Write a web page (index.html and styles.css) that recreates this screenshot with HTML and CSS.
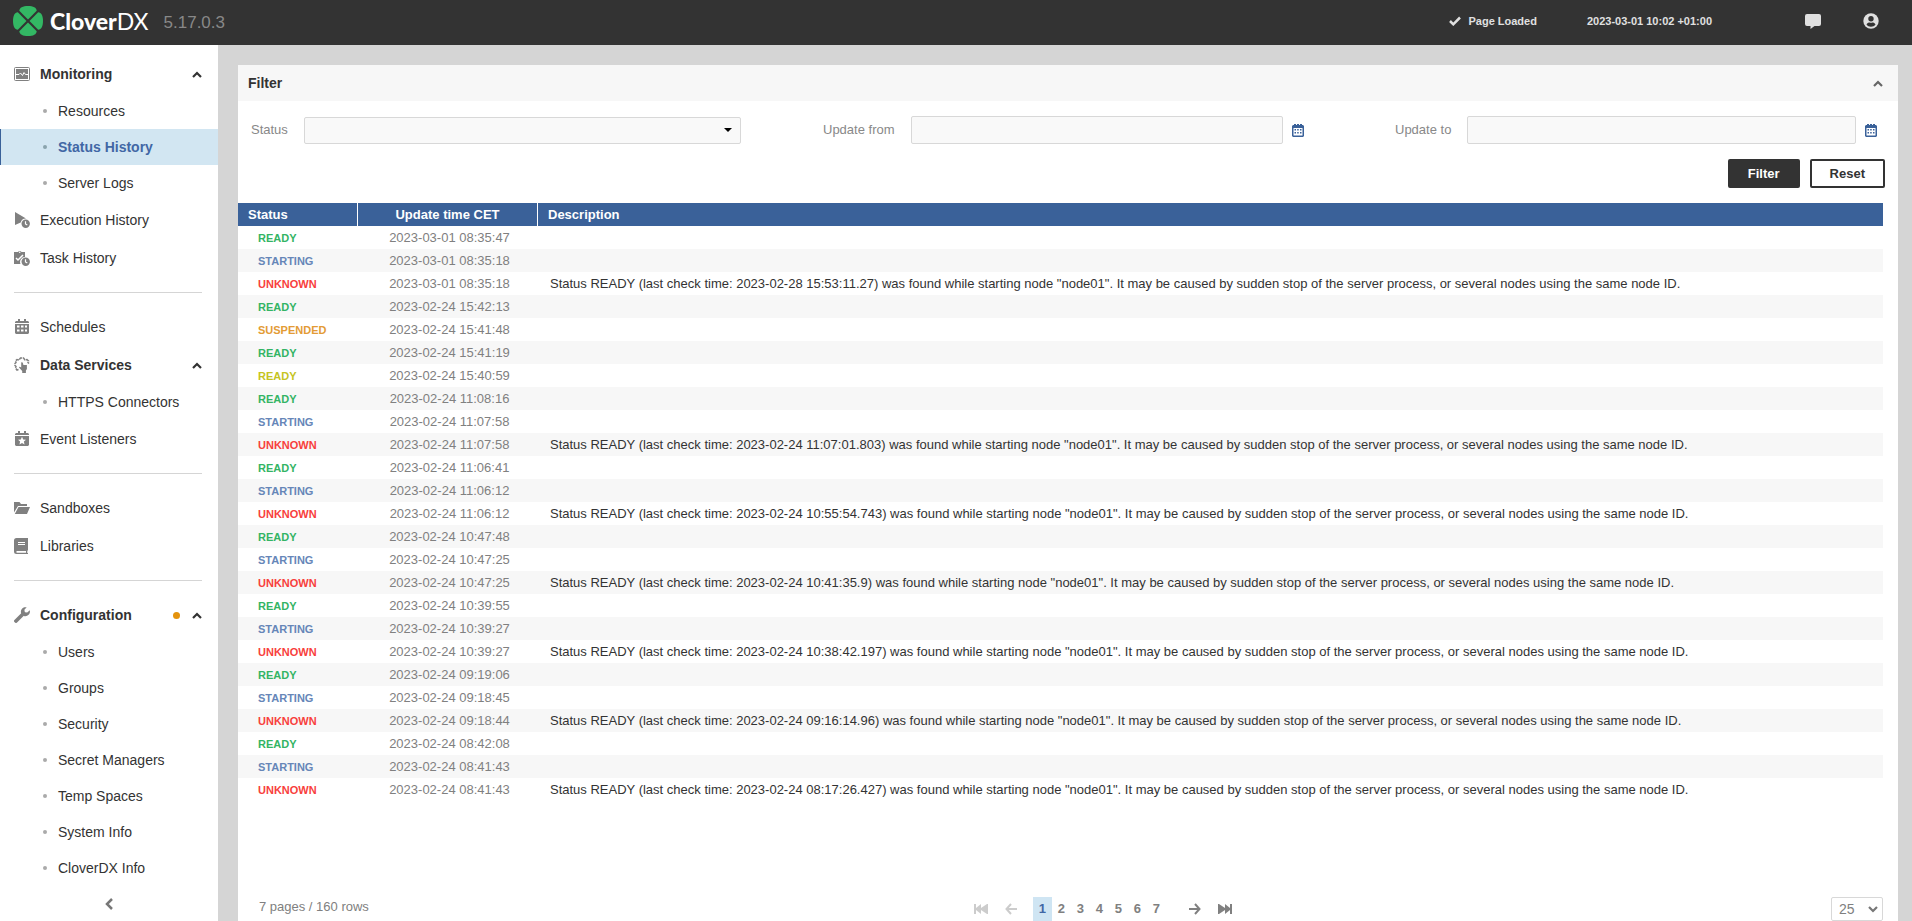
FILE: index.html
```html
<!DOCTYPE html>
<html lang="en">
<head>
<meta charset="utf-8">
<title>CloverDX Server - Status History</title>
<link rel="stylesheet" href="styles.css">
</head>
<body>
<svg class="defs" aria-hidden="true">
  <symbol id="up" viewBox="0 0 10 7"><path d="M1 6 5 2l4 4" fill="none" stroke="currentColor" stroke-width="2.2"/></symbol>
  <symbol id="calendar" viewBox="0 0 12 14"><path fill="currentColor" fill-rule="evenodd" d="M2 1h2v1h1V1h2v1h1V1h2v1h1l1 1v10l-1 1H1l-1-1V3l1-1h1zM1.500 5v7.500h9V5z"/><path fill="currentColor" d="M2.500 6H4v1.500H2.500zM5.200 6h1.500v1.500H5.200zM8 6h1.500v1.500H8zM2.500 9H4v1.500H2.500zM5.200 9h1.500v1.500H5.200zM8 9h1.500v1.500H8z"/></symbol>
</svg>
<div class="app">
  <header class="topbar">
    <div class="brand">
      <svg class="clover" viewBox="0 0 30 30" aria-hidden="true"><g fill="#33b864"><path id="leaf" d="M15 13.500 6.300 4.800C6.500 1.600 9.800 0 15 0s8.500 1.600 8.700 4.800z"/><use href="#leaf" transform="rotate(90 15 15)"/><use href="#leaf" transform="rotate(180 15 15)"/><use href="#leaf" transform="rotate(270 15 15)"/></g></svg>
      <span class="wordmark"><b>Clover</b>DX</span>
      <span class="version">5.17.0.3</span>
    </div>
    <div class="tools">
      <span class="loaded"><svg width="12" height="10" viewBox="0 0 12 10" aria-hidden="true"><path d="m1 5 3.300 3.300L11 1.500" fill="none" stroke="currentColor" stroke-width="2.500"/></svg>Page Loaded</span>
      <time class="clock">2023-03-01 10:02 +01:00</time>
      <button class="tool" aria-label="Messages"><svg width="16" height="16" viewBox="0 0 16 16"><path fill="currentColor" d="M2 1h12a2 2 0 0 1 2 2v8a2 2 0 0 1-2 2H9.500L5.500 16v-3H2a2 2 0 0 1-2-2V3a2 2 0 0 1 2-2z"/></svg></button>
      <button class="tool" aria-label="User"><svg width="16" height="16" viewBox="0 0 16 16"><circle cx="8" cy="8" r="7.700" fill="currentColor"/><circle cx="8" cy="5.800" r="2.700" fill="#333"/><path fill="#333" d="M3.500 11.500c.8-1.600 2-2 3-2 .9.400 2.100.4 3 0 1 0 2.200.4 3 2-1 1.500-2.700 2.200-4.500 2.200s-3.500-.7-4.500-2.200z"/></svg></button>
    </div>
  </header>
  <div class="body">
    <nav class="sidebar" aria-label="Main">
      <a class="item open" href="#"><svg class="icon" viewBox="0 0 16 16"><rect x=".5" y="1.500" width="15" height="13" rx="1" fill="none" stroke="currentColor"/><path fill="currentColor" d="M2 3h12v10H2z"/><path d="M2 8.500h3L6.500 7l2 2.500L10 6.500l1.500 2H14" fill="none" stroke="#fff"/></svg><span>Monitoring</span><svg class="chev"><use href="#up"/></svg></a>
      <a class="sub" href="#">Resources</a>
      <a class="sub active" href="#" aria-current="page">Status History</a>
      <a class="sub" href="#">Server Logs</a>
      <a class="item" href="#"><svg class="icon" viewBox="0 0 16 16"><path fill="currentColor" d="M1 0 12 6.500A5.300 5.300 0 0 0 6.700 10.500L1 13z"/><circle cx="11.700" cy="11.700" r="4.200" fill="currentColor"/><path d="M11.500 9.300v2.700l1.800 1" fill="none" stroke="#fff" stroke-width="1.200"/></svg><span>Execution History</span></a>
      <a class="item" href="#"><svg class="icon" viewBox="0 0 16 16"><path fill="currentColor" d="M0 2h4a2 2 0 0 1 3.500 0H11v5a5 5 0 0 0-4.500 7H0z"/><circle cx="5.700" cy="2.200" r=".8" fill="#fff"/><path d="m2 8 2 2 5-5" fill="none" stroke="#fff" stroke-width="1.500"/><circle cx="11.700" cy="11.700" r="4.200" fill="currentColor"/><path d="M11.500 9.300v2.700l1.800 1" fill="none" stroke="#fff" stroke-width="1.200"/></svg><span>Task History</span></a>
      <hr>
      <a class="item" href="#"><svg class="icon" viewBox="0 0 16 16"><path fill="currentColor" fill-rule="evenodd" d="M4 0h2v2h4V0h2v2h2l1 1v1H1V3l1-1h2zM1 5h14v9l-1 1H2l-1-1zM3 6.500v2h2.500v-2zM7 6.500v2h2.500v-2zM11 6.500v2h2v-2zM3 10.500v2h2.500v-2zM7 10.500v2h2.500v-2zM11 10.500v2h2v-2z"/></svg><span>Schedules</span></a>
      <a class="item open" href="#"><svg class="icon" viewBox="0 0 16 16"><path d="M4.500 12.500 3 13l-1.500-2L2 9.500l-1-1v-2l1-1L1.500 4 3 2.500l2 .5L6.500 1h3L11 3l2-.5L14.500 4 14 5.500l1 1" fill="none" stroke="currentColor" stroke-width="1.500" stroke-dasharray="3.500 .7"/><path fill="currentColor" d="M7.200 5.500c.6-.6 1.500-.4 1.700.4l.5 2 3.500.1V12l-1 1.500V16H8.200v-2L5 10.500c.2-1 1-1 2.200.1z"/></svg><span>Data Services</span><svg class="chev"><use href="#up"/></svg></a>
      <a class="sub" href="#">HTTPS Connectors</a>
      <a class="item" href="#"><svg class="icon" viewBox="0 0 16 16"><path fill="currentColor" d="M4 0h2v2h4V0h2v2h2l1 1v1H1V3l1-1h2zM1 5h14v9l-1 1H2l-1-1z"/><path fill="#fff" d="m8 5.800 1.200 2.600 2.800.3-2.100 1.900.6 2.800L8 12l-2.500 1.400.6-2.800L4 8.700l2.800-.3z"/></svg><span>Event Listeners</span></a>
      <hr>
      <a class="item" href="#"><svg class="icon" viewBox="0 0 16 16"><path fill="currentColor" d="M0 2h5.500l1.500 2h6v2H4L0 12.500zM4.500 7H16l-3 7H.8z"/></svg><span>Sandboxes</span></a>
      <a class="item" href="#"><svg class="icon" viewBox="0 0 16 16"><path fill="currentColor" fill-rule="evenodd" d="M2.500 0H14v12.500h-.7V15h.7v1H2.500A2.500 2.500 0 0 1 0 13.500v-11A2.500 2.500 0 0 1 2.500 0zM4 4v1h7V4zM4 6v1h7V6zM2.500 13v1.700H12V13z"/></svg><span>Libraries</span></a>
      <hr>
      <a class="item open" href="#"><svg class="icon" viewBox="0 0 16 16"><path d="m2 14 7.500-7.500" fill="none" stroke="currentColor" stroke-width="3.800" stroke-linecap="round"/><path fill="currentColor" d="M12.700.3A4.700 4.700 0 0 0 7 6l3 3a4.700 4.700 0 0 0 5.800-5.700L13.200 5.600 10.800 5.200 10.400 2.800z"/></svg><span>Configuration</span><i class="dot"></i><svg class="chev"><use href="#up"/></svg></a>
      <a class="sub" href="#">Users</a>
      <a class="sub" href="#">Groups</a>
      <a class="sub" href="#">Security</a>
      <a class="sub" href="#">Secret Managers</a>
      <a class="sub" href="#">Temp Spaces</a>
      <a class="sub" href="#">System Info</a>
      <a class="sub" href="#">CloverDX Info</a>
      <button class="collapse" aria-label="Collapse menu"><svg width="9" height="12" viewBox="0 0 9 12"><path d="M7 1 2 6l5 5" fill="none" stroke="currentColor" stroke-width="2.500"/></svg></button>
    </nav>
    <main class="main">
      <section class="panel">
        <h2 class="panel-title">Filter<button aria-label="Collapse filter"><svg class="chev"><use href="#up"/></svg></button></h2>
        <form class="filter">
          <div class="fields">
            <div class="field field-status"><label for="status">Status</label><span class="picker"><select id="status"><option></option><option>READY</option><option>STARTING</option><option>SUSPENDED</option><option>UNKNOWN</option></select><svg class="caret" viewBox="0 0 8 4"><path d="M0 0h8L4 4z"/></svg></span></div>
            <div class="field field-from"><label for="from">Update from</label><input id="from" type="text"><button type="button" class="cal" aria-label="Choose start date"><svg width="12" height="14"><use href="#calendar"/></svg></button></div>
            <div class="field field-to"><label for="to">Update to</label><input id="to" type="text"><button type="button" class="cal" aria-label="Choose end date"><svg width="12" height="14"><use href="#calendar"/></svg></button></div>
          </div>
          <div class="actions"><button type="button" class="btn dark">Filter</button><button type="reset" class="btn">Reset</button></div>
        </form>
        <div class="table-area">
          <table class="history">
            <thead><tr><th class="c-status">Status</th><th class="c-time">Update time CET</th><th>Description</th></tr></thead>
            <tbody>
              <tr><td class="ready">READY</td><td>2023-03-01 08:35:47</td><td></td></tr>
              <tr><td class="starting">STARTING</td><td>2023-03-01 08:35:18</td><td></td></tr>
              <tr><td class="unknown">UNKNOWN</td><td>2023-03-01 08:35:18</td><td>Status READY (last check time: 2023-02-28 15:53:11.27) was found while starting node "node01". It may be caused by sudden stop of the server process, or several nodes using the same node ID.</td></tr>
              <tr><td class="ready">READY</td><td>2023-02-24 15:42:13</td><td></td></tr>
              <tr><td class="suspended">SUSPENDED</td><td>2023-02-24 15:41:48</td><td></td></tr>
              <tr><td class="ready">READY</td><td>2023-02-24 15:41:19</td><td></td></tr>
              <tr><td class="ready-warn">READY</td><td>2023-02-24 15:40:59</td><td></td></tr>
              <tr><td class="ready">READY</td><td>2023-02-24 11:08:16</td><td></td></tr>
              <tr><td class="starting">STARTING</td><td>2023-02-24 11:07:58</td><td></td></tr>
              <tr><td class="unknown">UNKNOWN</td><td>2023-02-24 11:07:58</td><td>Status READY (last check time: 2023-02-24 11:07:01.803) was found while starting node "node01". It may be caused by sudden stop of the server process, or several nodes using the same node ID.</td></tr>
              <tr><td class="ready">READY</td><td>2023-02-24 11:06:41</td><td></td></tr>
              <tr><td class="starting">STARTING</td><td>2023-02-24 11:06:12</td><td></td></tr>
              <tr><td class="unknown">UNKNOWN</td><td>2023-02-24 11:06:12</td><td>Status READY (last check time: 2023-02-24 10:55:54.743) was found while starting node "node01". It may be caused by sudden stop of the server process, or several nodes using the same node ID.</td></tr>
              <tr><td class="ready">READY</td><td>2023-02-24 10:47:48</td><td></td></tr>
              <tr><td class="starting">STARTING</td><td>2023-02-24 10:47:25</td><td></td></tr>
              <tr><td class="unknown">UNKNOWN</td><td>2023-02-24 10:47:25</td><td>Status READY (last check time: 2023-02-24 10:41:35.9) was found while starting node "node01". It may be caused by sudden stop of the server process, or several nodes using the same node ID.</td></tr>
              <tr><td class="ready">READY</td><td>2023-02-24 10:39:55</td><td></td></tr>
              <tr><td class="starting">STARTING</td><td>2023-02-24 10:39:27</td><td></td></tr>
              <tr><td class="unknown">UNKNOWN</td><td>2023-02-24 10:39:27</td><td>Status READY (last check time: 2023-02-24 10:38:42.197) was found while starting node "node01". It may be caused by sudden stop of the server process, or several nodes using the same node ID.</td></tr>
              <tr><td class="ready">READY</td><td>2023-02-24 09:19:06</td><td></td></tr>
              <tr><td class="starting">STARTING</td><td>2023-02-24 09:18:45</td><td></td></tr>
              <tr><td class="unknown">UNKNOWN</td><td>2023-02-24 09:18:44</td><td>Status READY (last check time: 2023-02-24 09:16:14.96) was found while starting node "node01". It may be caused by sudden stop of the server process, or several nodes using the same node ID.</td></tr>
              <tr><td class="ready">READY</td><td>2023-02-24 08:42:08</td><td></td></tr>
              <tr><td class="starting">STARTING</td><td>2023-02-24 08:41:43</td><td></td></tr>
              <tr><td class="unknown">UNKNOWN</td><td>2023-02-24 08:41:43</td><td>Status READY (last check time: 2023-02-24 08:17:26.427) was found while starting node "node01". It may be caused by sudden stop of the server process, or several nodes using the same node ID.</td></tr>
            </tbody>
          </table>
        </div>
        <footer class="pager">
          <span class="summary">7 pages / 160 rows</span>
          <div class="pages">
            <button class="nav" disabled aria-label="First page"><svg width="14" height="12" viewBox="0 0 14 12"><path fill="currentColor" d="M0 1h2v4l5-4v4l6-4h1v10h-1L7 7v4L2 7v4H0z"/></svg></button>
            <button class="nav" disabled aria-label="Previous page"><svg width="12" height="12" viewBox="0 0 12 12"><path d="M6 1 1.500 6 6 11M1.500 6H12" fill="none" stroke="currentColor" stroke-width="2"/></svg></button>
            <span class="numbers"><button class="current" aria-current="page">1</button><button>2</button><button>3</button><button>4</button><button>5</button><button>6</button><button>7</button></span>
            <button class="nav" aria-label="Next page"><svg width="12" height="12" viewBox="0 0 12 12"><path d="m6 1 4.500 5L6 11M10.500 6H0" fill="none" stroke="currentColor" stroke-width="2"/></svg></button>
            <button class="nav" aria-label="Last page"><svg width="14" height="12" viewBox="0 0 14 12"><path fill="currentColor" d="M14 1h-2v4L7 1v4L1 1H0v10h1l6-4v4l5-4v4h2z"/></svg></button>
          </div>
          <span class="picker size"><select aria-label="Rows per page"><option>25</option><option>50</option><option>100</option></select><svg class="caret" viewBox="0 0 10 7"><path d="m1 1 4 4 4-4" fill="none" stroke="#777" stroke-width="2.200"/></svg></span>
        </footer>
      </section>
    </main>
  </div>
</div>
</body>
</html>
```
FILE: styles.css
```css
* { box-sizing: border-box; }

body {
  margin: 0;
  font: 13px/16px "Liberation Sans", Arial, sans-serif;
  color: #333;
}

button {
  border: 0;
  padding: 0;
  background: none;
  font: inherit;
  color: inherit;
}

svg { display: block; flex: none; }
.defs { display: none; }

.app {
  display: flex;
  flex-direction: column;
  height: 100vh;
  overflow: hidden;
}

/* Top bar */
.topbar {
  flex: none;
  display: flex;
  justify-content: space-between;
  align-items: center;
  height: 45px;
  padding: 0 33px 4px 13px;
  background: #333;
}
.brand, .tools, .loaded { display: flex; align-items: center; }
.clover { width: 30px; height: 30px; }
.wordmark {
  margin-left: 7px;
  font: 400 23px/30px Lato, sans-serif;
  color: #fff;
}
.wordmark b { font-weight: 900; }
.version {
  margin-left: 15px;
  padding-top: 4px;
  font-size: 17px;
  line-height: 20px;
  color: #888;
}
.tools { font-size: 11px; font-weight: bold; color: #e0e0e0; }
.loaded { gap: 7px; }
.clock { margin: 0 93px 0 50px; }
.tool + .tool { margin-left: 42px; }

.body { flex: 1; display: flex; min-height: 0; }

/* Sidebar */
.sidebar {
  flex: none;
  width: 218px;
  padding-top: 10px;
  overflow: hidden;
  font-size: 14px;
}
.sidebar a { display: flex; align-items: center; color: #333; text-decoration: none; }
.item { height: 38px; padding: 0 16px 0 14px; gap: 10px; }
.item span { flex: 1; }
.open { font-weight: bold; }
.icon { width: 16px; height: 16px; color: #808080; }
.chev { width: 10px; height: 7px; }
.dot { width: 7px; height: 7px; margin-right: 2px; border-radius: 50%; background: #e4930d; }
.sub { height: 36px; padding-left: 43px; gap: 11px; }
.sub::before { content: ""; width: 4px; height: 4px; border-radius: 50%; background: #aaa; }
.sidebar .active {
  padding-left: 42px;
  border-left: 1px solid #3a6199;
  background: #d2e6f2;
  font-weight: bold;
  color: #4167a5;
}
.active::before { background: #8aa3ad; }
.sidebar hr { height: 1px; margin: 15px 16px 15px 14px; border: 0; background: #d5d5d5; }
.collapse { display: grid; place-items: center; width: 100%; height: 36px; color: #777; }

/* Content */
.main {
  flex: 1;
  display: flex;
  min-width: 0;
  padding: 20px 14px 0 20px;
  background: #d5d5d5;
}
.panel { flex: 1; display: flex; flex-direction: column; min-width: 0; background: #fff; }
.panel-title {
  display: flex;
  justify-content: space-between;
  align-items: center;
  height: 36px;
  margin: 0;
  padding: 0 15px 0 10px;
  background: #f7f7f7;
  font-size: 14px;
}
.panel-title button { color: #666; }

.filter { padding: 15px 13px; }
.fields { display: grid; grid-template-columns: 572fr 572fr 490fr; }
.field { display: flex; align-items: center; height: 28px; color: #888; }
.field-status { padding-right: 82px; }
.field-from { padding-right: 91px; }
.field-to { padding-right: 8px; }
.field label { margin-right: 16px; }
.field input, .picker select {
  border: 1px solid #d8d8d8;
  border-radius: 2px;
  background: #f9f9f9;
  font: inherit;
}
.field input { flex: 1; min-width: 0; height: 28px; }
.picker { position: relative; flex: 1; }
.picker select { display: block; width: 100%; height: 27px; appearance: none; }
.caret { position: absolute; right: 9px; top: 11px; width: 8px; height: 4px; pointer-events: none; }
.cal { margin-left: 9px; color: #3a6199; }

.actions { display: flex; justify-content: flex-end; gap: 10px; margin-top: 15px; }
.btn {
  height: 29px;
  padding: 0 18px;
  border: 2px solid #333;
  border-radius: 2px;
  font-weight: bold;
}
.dark { background: #333; color: #fff; }

/* History table */
.table-area { flex: 1; padding-right: 15px; }
.history { width: 100%; table-layout: fixed; border-spacing: 0; }
.history th {
  height: 23px;
  padding: 0 10px;
  background: #3a6199;
  color: #fff;
  text-align: left;
}
.history th + th { border-left: 1px solid #fff; }
.c-status { width: 119px; }
.c-time { width: 180px; }
.history th.c-time { text-align: center; }
.history td { height: 23px; padding: 0 13px; white-space: nowrap; }
.history td:first-child { padding: 1px 0 0 20px; font-size: 11px; font-weight: bold; }
.history td:nth-child(2) { padding-right: 8px; text-align: center; color: #808080; }
.history tr:nth-child(even) td { background: #f7f7f7; }
.ready { color: #33b464; }
.starting { color: #6686b8; }
.unknown { color: #f8403c; }
.suspended { color: #e39b35; }
.ready-warn { color: #c5c422; }

/* Pager */
.pager {
  flex: none;
  display: flex;
  justify-content: space-between;
  height: 24px;
  padding: 0 15px 0 21px;
  color: #808080;
}
.summary { line-height: 20px; }
.pages { display: flex; align-items: center; height: 24px; padding-left: 6px; }
.nav { width: 30px; height: 24px; display: grid; place-items: center; }
.nav:disabled { color: #ccc; }
.numbers { display: flex; margin: 0 14px 0 7px; }
.numbers button { width: 19px; height: 24px; font-weight: bold; }
.numbers .current { background: #cfe5f3; color: #4167a5; }
.size { flex: none; width: 52px; }
.size select { height: 24px; padding-left: 7px; background: #fff; font-size: 14px; color: #808080; }
.size .caret { right: 5px; top: 9px; width: 10px; height: 7px; }
```
